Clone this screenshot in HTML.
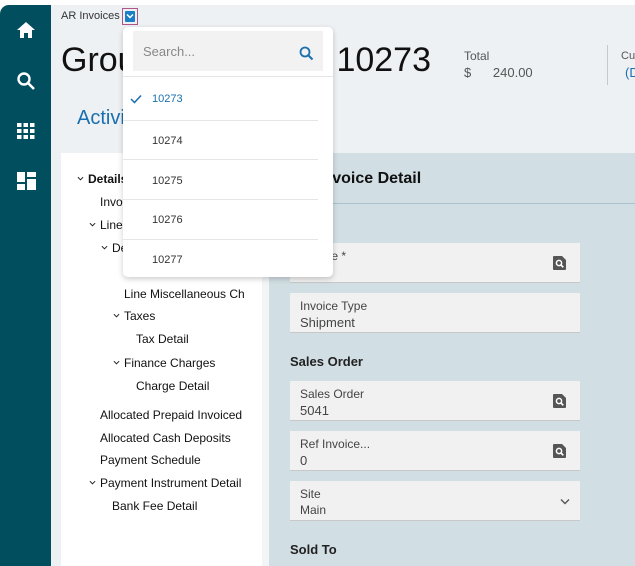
<!DOCTYPE html>
<html><head><style>
*{margin:0;padding:0;box-sizing:border-box}
body{width:635px;height:566px;overflow:hidden;background:#fff;font-family:"Liberation Sans",sans-serif;position:relative}
.abs{position:absolute}
#main{left:0;top:5px;width:635px;height:561px;background:#eef1f4;border-top-left-radius:9px;overflow:hidden}
#side{left:0;top:5px;width:51px;height:561px;background:#004e5e;border-top-left-radius:9px}
.t{position:absolute;font-size:12px;color:#111;white-space:nowrap}
.t svg{vertical-align:middle;margin-right:4px;margin-top:-2px}
.field{position:absolute;left:290px;width:290px;height:40px;background:#f1f1f1;border-bottom:1px solid #c8c8c8}
.field .l{position:absolute;left:10px;top:6px;font-size:12px;color:#444}
.field .v{position:absolute;left:10px;top:22px;font-size:13px;color:#444}
.lk{position:absolute;right:14px;top:13px}
.item{position:absolute;left:29px;font-size:11px;color:#333}
.div{position:absolute;left:0;width:195px;height:1px;background:#e6e6e6}
</style></head><body>
<div class="abs" id="main"></div>
<div class="abs" id="side"></div>
<svg class="abs" style="left:16px;top:21px" width="20" height="18" viewBox="0 0 20 18"><path d="M10 1L1 9h3v8h4v-5h4v5h4V9h3z" fill="#fff"/></svg>
<svg class="abs" style="left:16px;top:71px" width="20" height="20" viewBox="0 0 20 20"><circle cx="8" cy="8" r="5.5" stroke="#fff" stroke-width="2.4" fill="none"/><path d="M12 12l6 6" stroke="#fff" stroke-width="2.6"/></svg>
<svg class="abs" style="left:17px;top:123px" width="18" height="16" viewBox="0 0 18 16" fill="#fff"><rect x="0" y="0" width="4.5" height="4"/><rect x="6.5" y="0" width="4.5" height="4"/><rect x="13" y="0" width="4.5" height="4"/><rect x="0" y="6" width="4.5" height="4"/><rect x="6.5" y="6" width="4.5" height="4"/><rect x="13" y="6" width="4.5" height="4"/><rect x="0" y="12" width="4.5" height="4"/><rect x="6.5" y="12" width="4.5" height="4"/><rect x="13" y="12" width="4.5" height="4"/></svg>
<svg class="abs" style="left:17px;top:172px" width="19" height="18" viewBox="0 0 19 18" fill="#fff"><rect x="0" y="0" width="8" height="10"/><rect x="10" y="0" width="9" height="5"/><rect x="0" y="12" width="8" height="6"/><rect x="10" y="7" width="9" height="11"/></svg>

<div class="t" style="left:61px;top:10px;font-size:11px;color:#333">AR Invoices</div>
<div class="abs" style="left:122px;top:8px;width:16px;height:17px;border:1px solid #b0558a"></div>
<div class="abs" style="left:125px;top:11px;width:10px;height:11px;background:#1a7fc7;border-radius:1px"></div>
<svg class="abs" style="left:126px;top:13px" width="8" height="6"><path d="M1 1.5l3 3 3-3" stroke="#fff" stroke-width="1.5" fill="none"/></svg>

<div class="t" style="left:61px;top:41px;font-size:34px;color:#111">Group Invoic</div>
<div class="t" style="right:204px;top:41px;font-size:34px;color:#111">e 10273</div>
<div class="t" style="left:464px;top:49px;font-size:12px;color:#555">Total</div>
<div class="t" style="left:464px;top:65px;font-size:13px;color:#555">$&nbsp;&nbsp;&nbsp;&nbsp;&nbsp;&nbsp;240.00</div>
<div class="abs" style="left:607px;top:45px;width:1px;height:40px;background:#c8c8c8"></div>
<div class="t" style="left:621px;top:50px;font-size:11px;color:#555">Cu</div>
<div class="t" style="left:625px;top:65px;font-size:13px;color:#1a6fae">(D</div>
<div class="t" style="left:77px;top:107px;font-size:20px;color:#1a6fae">Activities</div>

<div class="abs" style="left:61px;top:153px;width:201px;height:413px;background:#fff"></div>
<div class="abs" style="left:262px;top:153px;width:7px;height:413px;background:#f3f4f5"></div>
<svg width="0" height="0" style="position:absolute"><defs><symbol id="cv" viewBox="0 0 8 5"><path d="M1 1l3 3 3-3" stroke="#222" stroke-width="1.2" fill="none"/></symbol></defs></svg>
<div class="t" style="left:77px;top:172px;font-weight:bold"><svg width="7" height="5"><use href="#cv"/></svg>Details</div>
<div class="t" style="left:100px;top:195px">Invoice</div>
<div class="t" style="left:89px;top:218px"><svg width="7" height="5"><use href="#cv"/></svg>Lines</div>
<div class="t" style="left:101px;top:241px"><svg width="7" height="5"><use href="#cv"/></svg>Details</div>
<div class="t" style="left:124px;top:287px;width:120px;overflow:hidden">Line Miscellaneous Charges</div>
<div class="t" style="left:113px;top:309px"><svg width="7" height="5"><use href="#cv"/></svg>Taxes</div>
<div class="t" style="left:136px;top:332px">Tax Detail</div>
<div class="t" style="left:113px;top:356px"><svg width="7" height="5"><use href="#cv"/></svg>Finance Charges</div>
<div class="t" style="left:136px;top:379px">Charge Detail</div>
<div class="t" style="left:100px;top:408px;width:143px;overflow:hidden">Allocated Prepaid Invoiced Deposits</div>
<div class="t" style="left:100px;top:431px">Allocated Cash Deposits</div>
<div class="t" style="left:100px;top:453px">Payment Schedule</div>
<div class="t" style="left:89px;top:476px"><svg width="7" height="5"><use href="#cv"/></svg>Payment Instrument Detail</div>
<div class="t" style="left:112px;top:499px">Bank Fee Detail</div>

<div class="abs" style="left:269px;top:153px;width:366px;height:413px;background:#d1dee3"></div>
<div class="abs" style="left:269px;top:203px;width:366px;height:1px;background:#a9c1cb"></div>
<div class="t" style="left:318px;top:170px;font-size:16px;font-weight:bold;color:#111">Invoice Detail</div>
<svg width="0" height="0" style="position:absolute"><defs><symbol id="lk" viewBox="0 0 13 14"><path d="M1 0h8l4 4v9a1 1 0 0 1-1 1H1a1 1 0 0 1-1-1V1a1 1 0 0 1 1-1z" fill="#555"/><circle cx="6" cy="7" r="2.6" stroke="#fff" stroke-width="1.5" fill="none"/><path d="M8 9l2.3 2.3" stroke="#fff" stroke-width="1.6"/></symbol></defs></svg>
<div class="field" style="top:243px"><div class="l">Invoice *</div><svg class="lk" width="13" height="14"><use href="#lk"/></svg></div>
<div class="field" style="top:293px"><div class="l">Invoice Type</div><div class="v">Shipment</div></div>
<div class="t" style="left:290px;top:354px;font-size:13px;font-weight:bold;color:#222">Sales Order</div>
<div class="field" style="top:381px"><div class="l">Sales Order</div><div class="v">5041</div><svg class="lk" width="13" height="14"><use href="#lk"/></svg></div>
<div class="field" style="top:431px"><div class="l">Ref Invoice...</div><div class="v">0</div><svg class="lk" width="13" height="14"><use href="#lk"/></svg></div>
<div class="field" style="top:481px"><div class="l">Site</div><div class="v" style="font-size:12px">Main</div>
<svg style="position:absolute;right:10px;top:17px" width="10" height="7"><path d="M1 1.5l4 4 4-4" stroke="#555" stroke-width="1.4" fill="none"/></svg></div>
<div class="t" style="left:290px;top:542px;font-size:13px;font-weight:bold;color:#222">Sold To</div>

<div class="abs" style="left:123px;top:27px;width:210px;height:250px;background:#fff;border-radius:5px;box-shadow:0 2px 6px rgba(0,0,0,.2)">
 <div class="abs" style="left:10px;top:4px;width:190px;height:40px;background:#f2f2f2"></div>
 <div class="abs" style="left:20px;top:17px;font-size:13px;color:#888">Search...</div>
 <svg class="abs" style="left:176px;top:19px" width="15" height="15"><circle cx="6" cy="6" r="4.5" stroke="#1a6fae" stroke-width="1.8" fill="none"/><path d="M9.5 9.5l4 4" stroke="#1a6fae" stroke-width="2"/></svg>
 <div class="abs" style="left:0;top:49px;width:210px;height:1px;background:#e6e6e6"></div>
 <svg class="abs" style="left:7px;top:67px" width="12" height="10"><path d="M1 5l3.5 3.5L11 1.5" stroke="#1a6fae" stroke-width="1.5" fill="none"/></svg>
 <div class="item" style="top:66px;color:#1a6fae">10273</div>
 <div class="div" style="top:93px"></div>
 <div class="item" style="top:108px">10274</div>
 <div class="div" style="top:132px"></div>
 <div class="item" style="top:148px">10275</div>
 <div class="div" style="top:172px"></div>
 <div class="item" style="top:187px">10276</div>
 <div class="div" style="top:212px"></div>
 <div class="item" style="top:227px">10277</div>
</div>
</body></html>
